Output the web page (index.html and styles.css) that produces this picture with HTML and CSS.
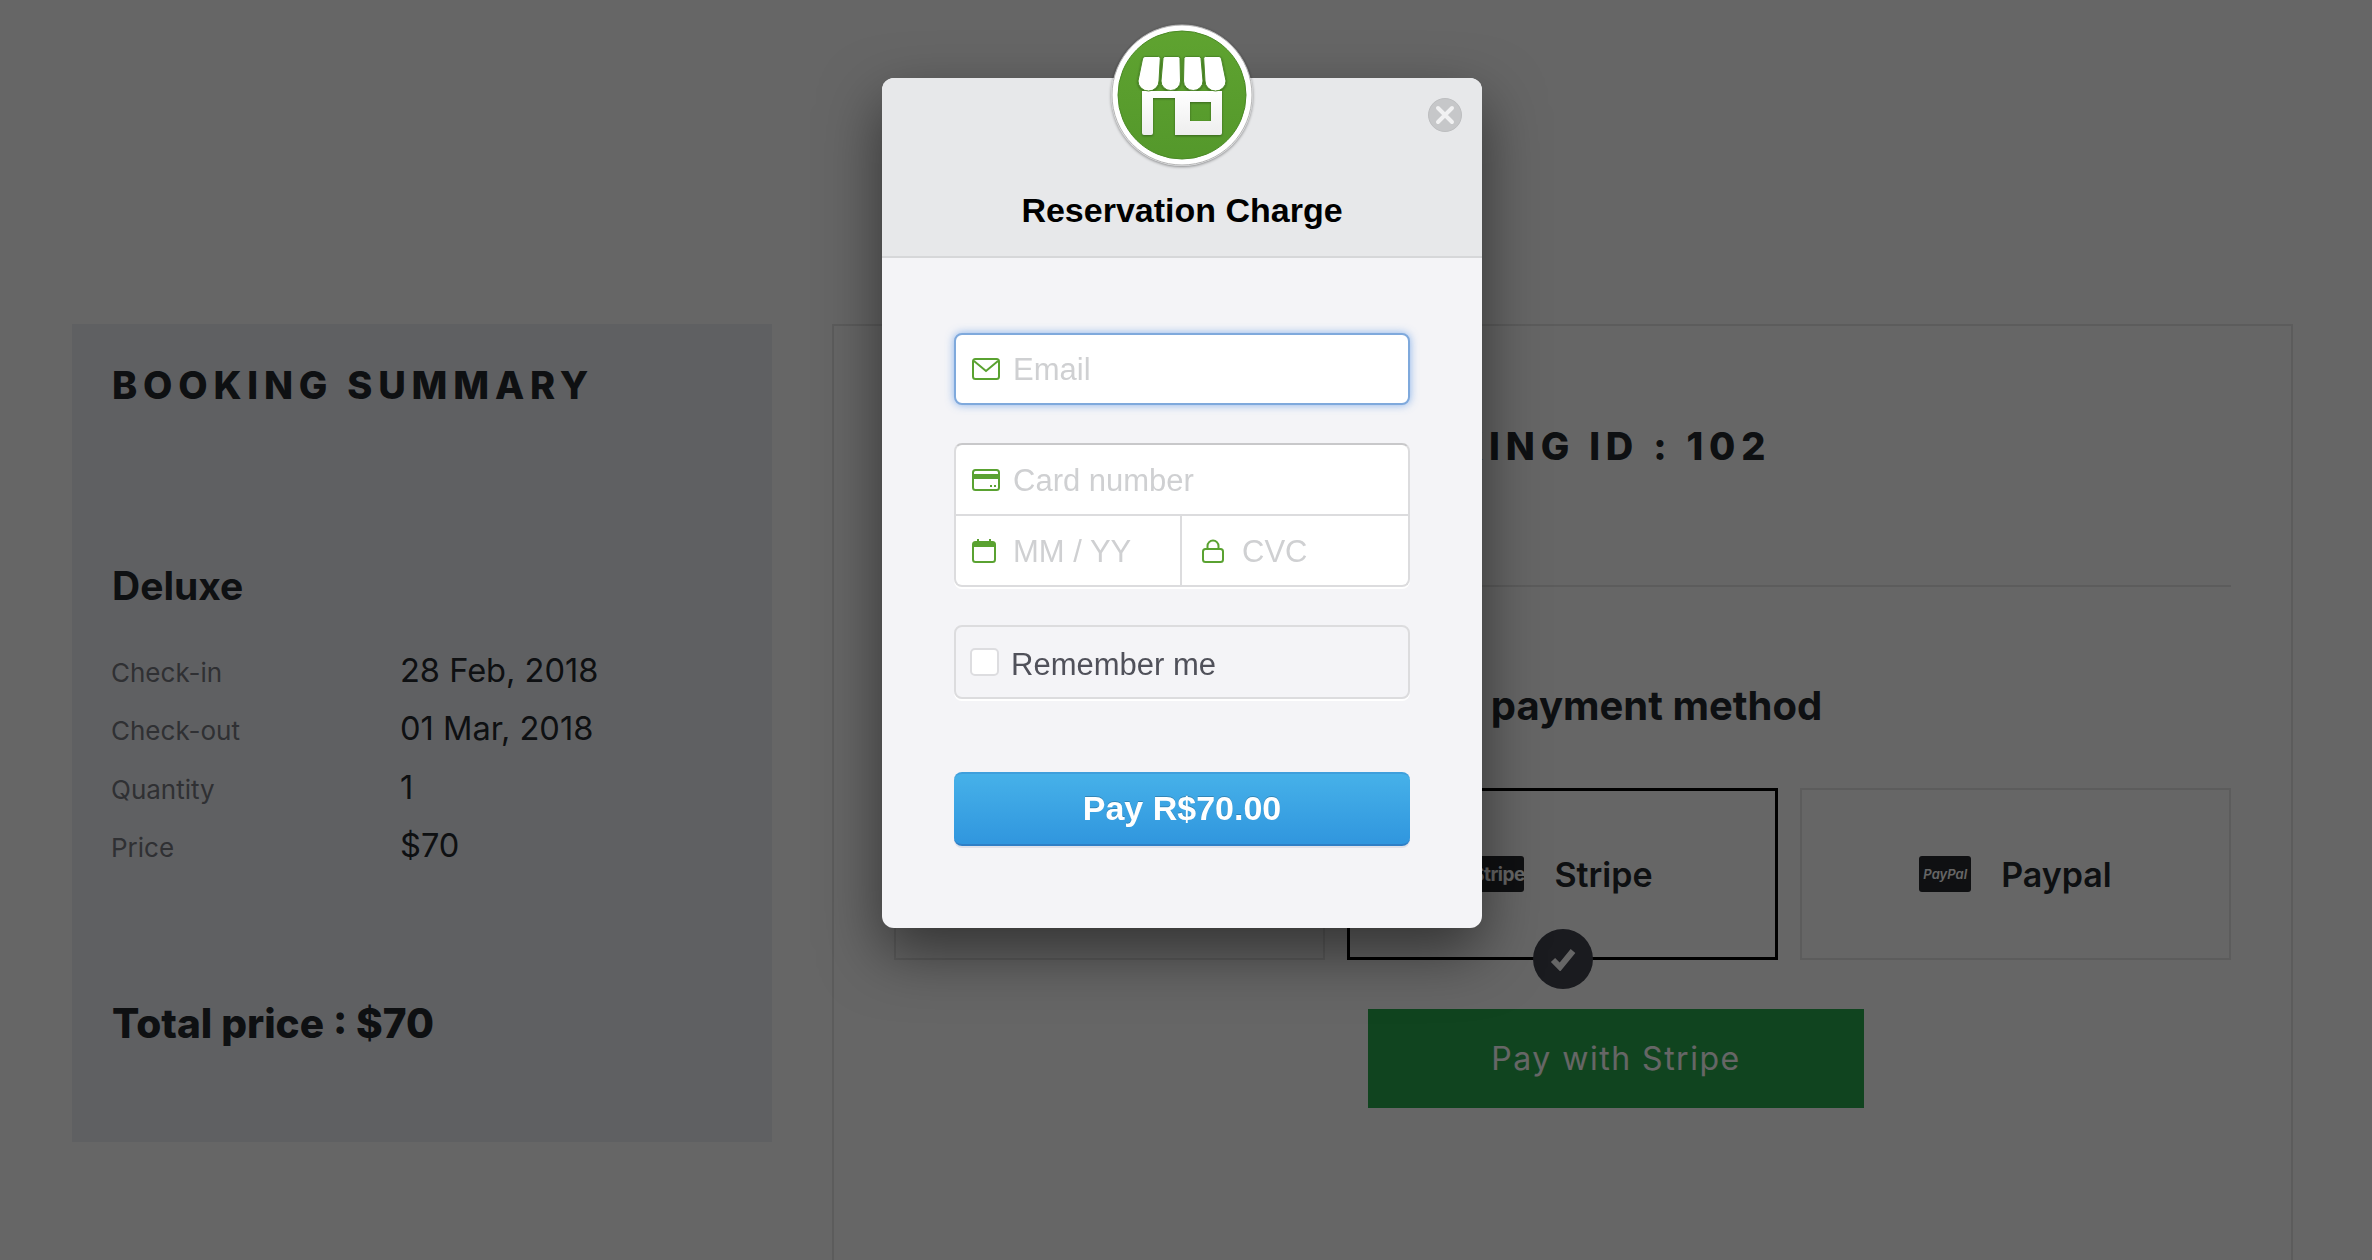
FILE: index.html
```html
<!DOCTYPE html>
<html lang="en">
<head>
  <meta charset="UTF-8" />
  <title>Booking Payment</title>
  <link rel="stylesheet" href="styles.css">
</head>
<body>
  <div class="page">
    <aside class="summary">
      <h2 class="section-title">BOOKING SUMMARY</h2>
      <h3 class="room-name">Deluxe</h3>
      <dl class="details">
        <dt>Check-in</dt><dd>28 Feb, 2018</dd>
        <dt>Check-out</dt><dd>01 Mar, 2018</dd>
        <dt>Quantity</dt><dd>1</dd>
        <dt>Price</dt><dd>$70</dd>
      </dl>
      <p class="total">Total price : $70</p>
    </aside>

    <main class="booking">
      <h2 class="section-title centered">BOOKING ID : 102</h2>
      <hr class="divider">
      <h3 class="method-title">Choose a payment method</h3>
      <div class="methods">
        <div class="method"></div>
        <div class="method selected">
          <span class="brand">Stripe</span>
          <span class="method-name">Stripe</span>
          <span class="check">
            <svg width="26" height="24" viewBox="0 0 26 24"><path d="M3 13l7 7L23 4" fill="none" stroke="#fff" stroke-width="6"/></svg>
          </span>
        </div>
        <div class="method">
          <span class="brand paypal">PayPal</span>
          <span class="method-name">Paypal</span>
        </div>
      </div>
      <button class="pay-stripe" type="button">Pay with Stripe</button>
    </main>
  </div>

  <div class="overlay"></div>

  <div class="modal">
    <div class="logo">
      <svg width="142" height="142" viewBox="0 0 142 142">
        <defs>
          <linearGradient id="shopWhite" x1="0" y1="0" x2="0" y2="1">
            <stop offset="0" stop-color="#ffffff"/>
            <stop offset="1" stop-color="#eeeeee"/>
          </linearGradient>
          <linearGradient id="shopGreen" x1="0" y1="0" x2="0" y2="1">
            <stop offset="0" stop-color="#5fa330"/>
            <stop offset="1" stop-color="#54982b"/>
          </linearGradient>
        </defs>
        <circle cx="71" cy="71" r="70" fill="#fff" stroke="#b5b5b5" stroke-width="1"/>
        <circle cx="71" cy="71" r="64" fill="url(#shopGreen)" stroke="#4b8a26" stroke-width="1"/>
        <g class="shop">
          <path fill="url(#shopWhite)" fill-rule="evenodd" d="M31 67H111V109Q111 111 109 111H64V74H42V109Q42 111 40 111H33Q31 111 31 109ZM79 78V97H100V78Z"/>
          <g fill="#fff" stroke="#4b8a26" stroke-width="1">
            <path d="M34 32.5H47.5Q49.5 32.5 49.3 34.5L48 57A10.5 10 0 0 1 27 57L31.5 35Q32 32.5 34 32.5Z"/>
            <path d="M54 32.5H67Q69 32.5 69 34.5L69.5 57A9.75 9.5 0 0 1 50 57L52 34.5Q52.3 32.5 54 32.5Z"/>
            <path d="M75 32.5H88Q89.7 32.5 90 34.5L92 57A9.75 9.5 0 0 1 72.5 57L73 34.5Q73 32.5 75 32.5Z"/>
            <path d="M94.5 32.5H108Q110 32.5 110.5 35L115 57A10.5 10 0 0 1 94 57L92.7 34.5Q92.5 32.5 94.5 32.5Z"/>
          </g>
        </g>
      </svg>
    </div>
    <button class="close" type="button" aria-label="Close">
      <svg width="20" height="20" viewBox="0 0 20 20"><path d="M3 3l14 14M17 3L3 17" fill="none" stroke="#f1f1f2" stroke-width="4" stroke-linecap="round"/></svg>
    </button>

    <header class="modal-head">
      <h1>Reservation Charge</h1>
    </header>

    <form class="modal-body">
      <div class="field focused">
        <svg class="field-icon" width="28" height="22" viewBox="0 0 28 22"><rect x="1" y="1" width="26" height="20" rx="2.5" fill="none" stroke="#5aa231" stroke-width="2"/><path d="M2 3l12 10L26 3" fill="none" stroke="#5aa231" stroke-width="2"/></svg>
        <input type="text" placeholder="Email">
      </div>

      <div class="card-group">
        <div class="field">
          <svg class="field-icon" width="28" height="22" viewBox="0 0 28 22"><rect x="1" y="1" width="26" height="20" rx="2.5" fill="none" stroke="#5aa231" stroke-width="2"/><rect x="1" y="5" width="26" height="5" fill="#5aa231"/><rect x="18" y="16" width="2" height="2" fill="#5aa231"/><rect x="22" y="16" width="2" height="2" fill="#5aa231"/></svg>
          <input type="text" placeholder="Card number">
        </div>
        <div class="card-row">
          <div class="field">
            <svg class="field-icon" width="24" height="24" viewBox="0 0 24 24"><rect x="1" y="3" width="22" height="20" rx="2.5" fill="none" stroke="#5aa231" stroke-width="2"/><rect x="1" y="3" width="22" height="5" fill="#5aa231"/><rect x="5" y="0" width="2" height="4" fill="#5aa231"/><rect x="17" y="0" width="2" height="4" fill="#5aa231"/></svg>
            <input class="gap-date" type="text" placeholder="MM / YY">
          </div>
          <div class="field field-cvc">
            <svg class="field-icon" width="22" height="24" viewBox="0 0 22 24"><rect x="1" y="10" width="20" height="13" rx="2.5" fill="none" stroke="#5aa231" stroke-width="2"/><path d="M5.5 10V7a5.5 5.5 0 0 1 11 0v3" fill="none" stroke="#5aa231" stroke-width="2"/></svg>
            <input type="text" placeholder="CVC">
          </div>
        </div>
      </div>

      <label class="remember">
        <input type="checkbox">
        <span class="remember-text">Remember me</span>
      </label>

      <button class="pay" type="button">Pay R$70.00</button>
    </form>
  </div>
</body>
</html>
```

FILE: styles.css
```css
* {
  box-sizing: border-box;
}

html, body {
  margin: 0;
  height: 1260px;
  overflow: hidden;
  background: #fff;
}

body {
  font-family: Inter, "Liberation Sans", sans-serif;
  color: #25282d;
}

.page {
  display: flex;
  align-items: flex-start;
  gap: 60px;
  height: 1260px;
  overflow: hidden;
  padding: 324px 79px 0 72px;
}

/* booking summary */
.summary {
  flex: 0 0 700px;
  height: 818px;
  padding: 38px 40px 0;
  background: #eef0f5;
}

.section-title {
  margin: 0;
  font-size: 38px;
  line-height: 46px;
  font-weight: 800;
  letter-spacing: 5.8px;
}

.centered {
  text-align: center;
}

.room-name {
  margin: 155px 0 0;
  font-size: 39px;
  line-height: 46px;
  font-weight: 700;
}

.details {
  display: grid;
  grid-template-columns: 288px 1fr;
  grid-auto-rows: 58.3px;
  align-items: baseline;
  margin: 41px 0 0;
}

.details dt {
  margin-left: -1px;
  font-size: 26px;
  color: #767880;
}

.details dd {
  margin: 0;
  font-size: 32.6px;
}

.total {
  margin: 118px 0 0;
  font-size: 40.5px;
  line-height: 46px;
  font-weight: 800;
}

/* booking panel */
.booking {
  flex: 1;
  height: 1100px;
  padding: 97px 60px 0;
  border: 2px solid #e6e6e6;
}

.divider {
  margin: 116px 0 0;
  border: 0;
  border-top: 2px solid #e6e6e6;
}

.method-title {
  margin: 96px 0 0;
  padding-right: 4px;
  font-size: 40px;
  line-height: 46px;
  font-weight: 700;
  text-align: center;
}

.methods {
  display: grid;
  grid-template-columns: repeat(3, 1fr);
  gap: 22px;
  margin-top: 59px;
}

.method {
  position: relative;
  display: flex;
  align-items: center;
  justify-content: center;
  gap: 30px;
  height: 172px;
  border: 2px solid #e6e6e6;
}

.method.selected {
  border: 3px solid #000;
}

.brand {
  display: flex;
  align-items: center;
  justify-content: center;
  width: 52px;
  height: 36px;
  border-radius: 3px;
  background: #26282d;
  color: #fff;
  font-size: 19px;
  font-weight: 700;
  letter-spacing: -0.5px;
  white-space: nowrap;
}

.brand.paypal {
  font-size: 13px;
  font-style: italic;
  font-weight: 600;
  letter-spacing: 0;
}

.method-name {
  font-size: 34px;
  font-weight: 600;
}

.check {
  position: absolute;
  left: 50%;
  bottom: -32px;
  display: flex;
  align-items: center;
  justify-content: center;
  width: 60px;
  height: 60px;
  margin-left: -30px;
  border-radius: 50%;
  background: #41444f;
}

.pay-stripe {
  display: block;
  width: 496px;
  height: 99px;
  margin: 49px 0 0 474px;
  border: 0;
  background: #2aaa4e;
  color: #fff;
  font-family: Inter, sans-serif;
  font-size: 32px;
  letter-spacing: 1.5px;
}

/* dimmed backdrop */
.overlay {
  position: fixed;
  inset: 0;
  background: rgba(0, 0, 0, 0.6);
}

/* checkout modal */
.modal {
  position: absolute;
  top: 78px;
  left: 882px;
  width: 600px;
  height: 850px;
  border-radius: 12px;
  background: #f4f4f7;
  box-shadow: 0 24px 60px rgba(0, 0, 0, 0.5);
  font-family: "Liberation Sans", Arial, sans-serif;
}

.logo {
  position: absolute;
  top: -54px;
  left: 229px;
  width: 142px;
  height: 142px;
  border-radius: 50%;
  box-shadow: 0 1px 3px rgba(0, 0, 0, 0.4);
}

.logo svg {
  display: block;
}

.shop {
  filter: drop-shadow(0 1px 1px rgba(0, 0, 0, 0.35));
}

.close {
  position: absolute;
  top: 20px;
  right: 20px;
  display: flex;
  align-items: center;
  justify-content: center;
  width: 34px;
  height: 34px;
  padding: 0;
  border: 1px solid #bdbec0;
  border-radius: 50%;
  background: #c6c7c9;
}

.modal-head {
  height: 180px;
  padding-top: 112px;
  border-bottom: 2px solid #d6d7d9;
  border-radius: 12px 12px 0 0;
  background: #e7e8ea;
}

.modal-head h1 {
  margin: 0;
  color: #000;
  font-size: 34px;
  line-height: 40px;
  font-weight: 700;
  text-align: center;
}

.modal-body {
  display: flex;
  flex-direction: column;
  padding: 75px 72px 0;
}

.field {
  display: flex;
  align-items: center;
  gap: 13px;
  height: 72px;
  padding-left: 18px;
}

.field-icon {
  flex: none;
}

.field input {
  flex: 1;
  width: 100%;
  min-width: 0;
  padding: 2px 0 0;
  border: 0;
  outline: 0;
  background: transparent;
  font-family: "Liberation Sans", Arial, sans-serif;
  font-size: 31px;
}

.field input::placeholder {
  color: #cfd0d2;
  opacity: 1;
}

.field.focused {
  padding-left: 16px;
  border: 2px solid #7fa9dc;
  border-radius: 8px;
  background: #fff;
  box-shadow: 0 0 8px rgba(90, 150, 230, 0.7);
}

.card-group {
  margin-top: 38px;
  border: 2px solid #dcdcde;
  border-top-color: #c8c8ca;
  border-radius: 8px;
  background: #fff;
  box-shadow: 0 2px 0 #fff;
}

.card-group .field {
  padding-left: 16px;
  height: 69px;
}

.card-row {
  display: grid;
  grid-template-columns: 224px 1fr;
  border-top: 2px solid #dcdcde;
}

.gap-date {
  margin-left: 4px;
}

.card-group .field-cvc {
  gap: 18px;
  padding-left: 20px;
  border-left: 2px solid #dcdcde;
}

.remember {
  display: flex;
  align-items: center;
  gap: 12px;
  height: 74px;
  margin-top: 38px;
  padding-left: 14px;
  border: 2px solid #dcdcde;
  border-radius: 8px;
  box-shadow: 0 2px 0 #fff;
  color: #50515a;
  font-size: 31px;
}

.remember-text {
  padding-top: 5px;
}

.remember input {
  flex: none;
  width: 29px;
  height: 28px;
  margin: 0;
  appearance: none;
  border: 2px solid #dddde0;
  border-radius: 5px;
  background: #fff;
}

.pay {
  height: 74px;
  margin-top: 73px;
  padding-bottom: 3px;
  border: 0;
  border-top: 2px solid #3f9fdc;
  border-bottom: 2px solid #2f7fc6;
  border-radius: 8px;
  background: linear-gradient(#46b1e9, #3096de);
  box-shadow: 0 2px 0 #dfe1ea;
  color: #fff;
  font-family: "Liberation Sans", Arial, sans-serif;
  font-size: 34px;
  font-weight: 700;
  text-shadow: 0 -1px 0 rgba(0, 0, 0, 0.2);
}
```
